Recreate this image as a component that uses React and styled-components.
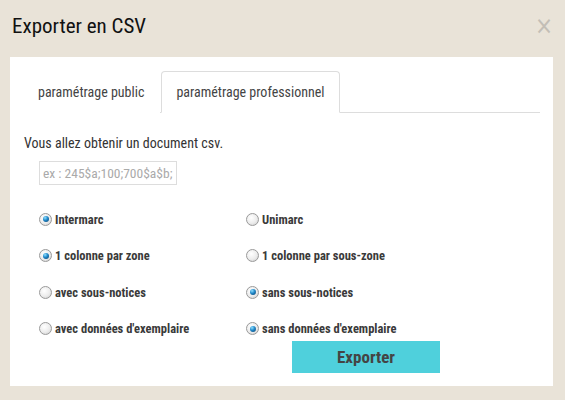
import React from "react";
import styled, { createGlobalStyle } from "styled-components";

const Global = createGlobalStyle`
  html, body { margin: 0; padding: 0; }
  body {
    background: #e9e3d8;
    font-family: Roboto, "Liberation Sans", sans-serif;
    font-stretch: 85%;
    color: #333;
  }
`;

const Modal = styled.div`
  width: 565px;
  height: 400px;
  box-sizing: border-box;
  padding: 0 12px 14px 10px;
  display: flex;
  flex-direction: column;
`;

const Header = styled.div`
  height: 57px;
  display: flex;
  align-items: center;
  justify-content: space-between;
  padding: 0 0 6px 2px;
  box-sizing: border-box;
`;

const Title = styled.h1`
  margin: 0;
  font-size: 21px;
  font-weight: 400;
  color: #111;
`;

const Close = styled.span`
  font-size: 24px;
  color: #c3beb6;
  line-height: 1;
  font-family: "DejaVu Sans", sans-serif;
`;

const Body = styled.div`
  background: #fff;
  flex: 1;
  padding: 14px 13px 0 12px;
`;

const Tabs = styled.div`
  display: flex;
  border-bottom: 1px solid #ddd;
  height: 41px;
`;

const Tab = styled.div`
  padding: 0 ${(p) => (p.active ? "14px" : "15px")};
  margin-right: 1px;
  display: flex;
  align-items: center;
  font-size: 14px;
  color: #444;
  margin-bottom: -1px;
  border: 1px solid ${(p) => (p.active ? "#ddd" : "transparent")};
  border-bottom-color: ${(p) => (p.active ? "#fff" : "transparent")};
  border-radius: 4px 4px 0 0;
  background: #fff;
`;

const Intro = styled.p`
  margin: 22px 0 0 2px;
  font-size: 14px;
  color: #333;
`;

const Field = styled.input`
  margin: 10px 0 0 17px;
  width: 138px;
  height: 24px;
  box-sizing: border-box;
  border: 1px solid #ddd;
  padding: 0 3px;
  font-family: inherit;
  font-stretch: 85%;
  font-size: 13.5px;
  &::placeholder { color: #aaa; }
`;

const Grid = styled.div`
  display: grid;
  grid-template-columns: 207px 1fr;
  row-gap: 18.5px;
  margin: 25px 0 0 17px;
`;

const Option = styled.label`
  display: flex;
  align-items: center;
  gap: 3px;
  font-size: 12.5px;
  font-weight: 700;
  color: #3a3a3a;
  height: 18px;
`;

const Radio = styled.span`
  width: 13px;
  height: 13px;
  border-radius: 50%;
  box-sizing: border-box;
  border: 1px solid #9a9a9a;
  background: radial-gradient(circle at 40% 35%, #ffffff 0%, #ececec 55%, #c8c8c8 100%);
  display: flex;
  align-items: center;
  justify-content: center;
  &::after {
    content: "";
    width: 6px;
    height: 6px;
    border-radius: 50%;
    background: radial-gradient(circle at 35% 30%, #8fe0ff 0%, #1f86c8 45%, #0a3d66 100%);
    display: ${(p) => (p.checked ? "block" : "none")};
  }
`;

const Footer = styled.div`
  display: flex;
  padding-left: 270px;
  margin-top: 3px;
`;

const Button = styled.button`
  width: 148px;
  height: 32px;
  border: none;
  background: #4fd0dc;
  color: #444;
  font-family: inherit;
  font-stretch: 85%;
  font-size: 17px;
  font-weight: 700;
`;

const options = [
  ["Intermarc", true],
  ["Unimarc", false],
  ["1 colonne par zone", true],
  ["1 colonne par sous-zone", false],
  ["avec sous-notices", false],
  ["sans sous-notices", true],
  ["avec données d'exemplaire", false],
  ["sans données d'exemplaire", true],
];

export default function App() {
  return (
    <>
      <Global />
      <Modal>
        <Header>
          <Title>Exporter en CSV</Title>
          <Close>×</Close>
        </Header>
        <Body>
          <Tabs>
            <Tab>paramétrage public</Tab>
            <Tab active>paramétrage professionnel</Tab>
          </Tabs>
          <Intro>Vous allez obtenir un document csv.</Intro>
          <Field placeholder="ex : 245$a;100;700$a$b;" />
          <Grid>
            {options.map(([label, checked]) => (
              <Option key={label}>
                <Radio checked={checked} />
                {label}
              </Option>
            ))}
          </Grid>
          <Footer>
            <Button>Exporter</Button>
          </Footer>
        </Body>
      </Modal>
    </>
  );
}
